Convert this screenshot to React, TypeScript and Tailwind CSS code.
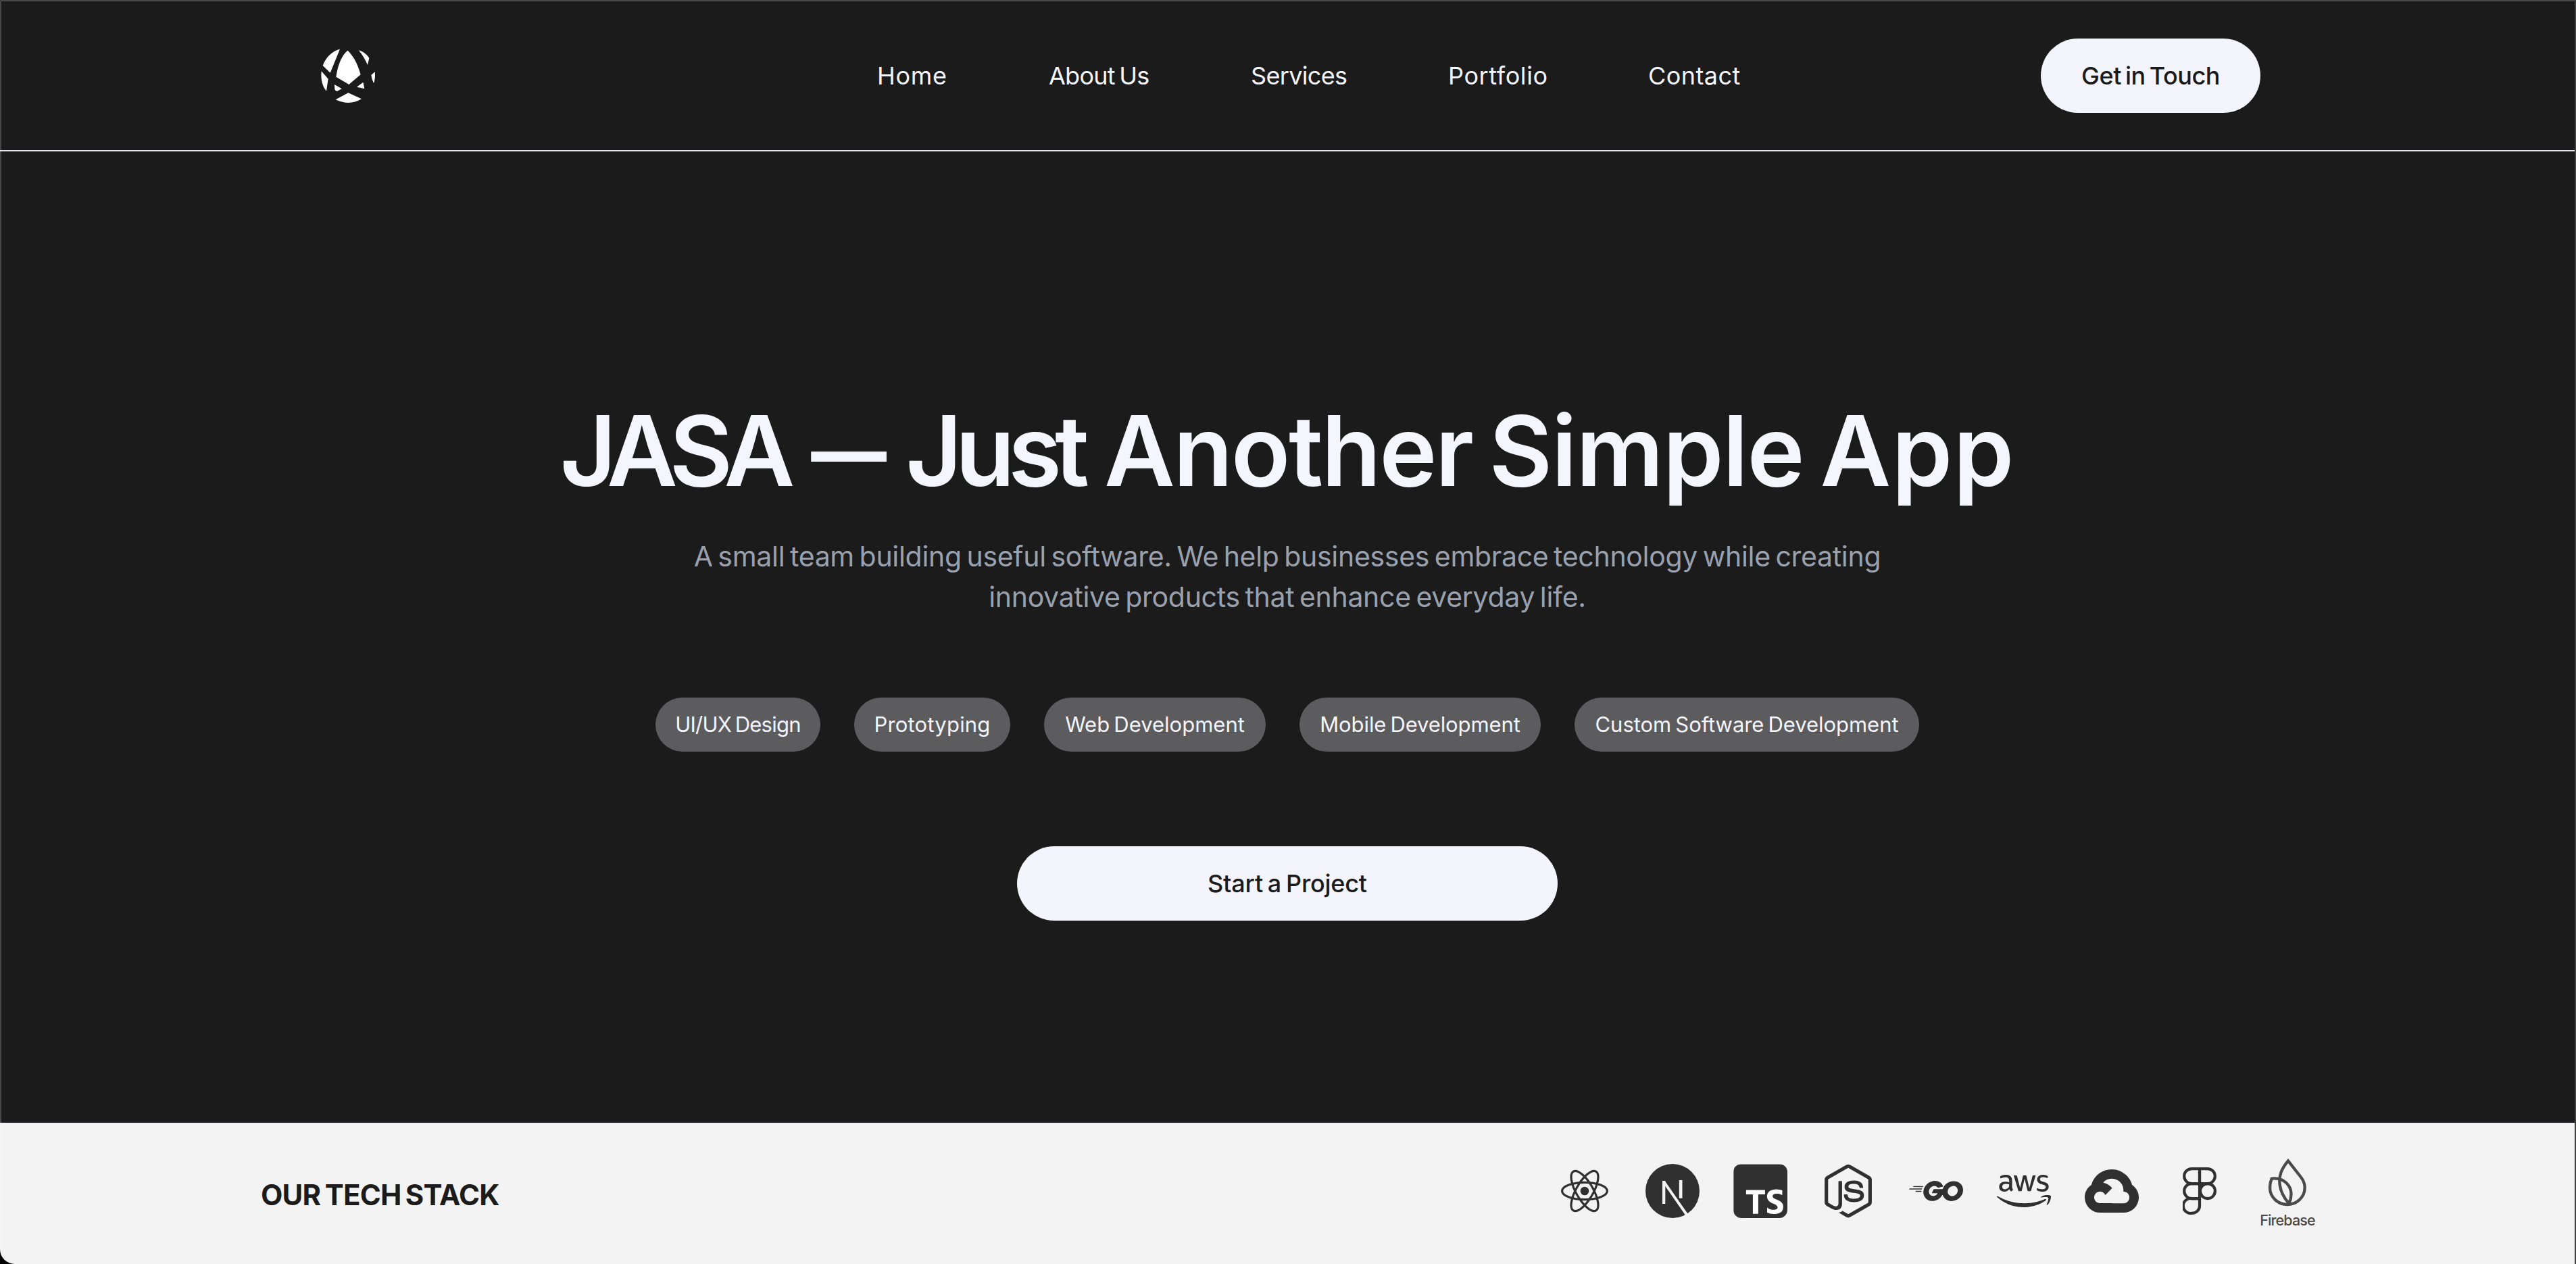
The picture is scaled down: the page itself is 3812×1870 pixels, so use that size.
import React from "react";
import { BiLogoTypescript } from "react-icons/bi";
import { FaAws, FaNodeJs } from "react-icons/fa";
import { SiGo, SiGooglecloud } from "react-icons/si";

const navItems = [
  { label: "Home", className: "w-[104px] tracking-[0.7px]" },
  { label: "About Us", className: "w-[149px] tracking-[-0.75px] [word-spacing:-3px]" },
  { label: "Services", className: "w-[142px] tracking-[-0.67px]" },
  { label: "Portfolio", className: "w-[146px] tracking-[0.6px]" },
  { label: "Contact", className: "w-[137px] tracking-[0.44px]" },
];

const services = [
  { label: "UI/UX Design", className: "w-[244px] tracking-[-0.75px]" },
  { label: "Prototyping", className: "w-[231px] tracking-[0.2px]" },
  { label: "Web Development", className: "w-[328px]" },
  { label: "Mobile Development", className: "w-[357px] tracking-[-0.1px]" },
  { label: "Custom Software Development", className: "w-[510px] tracking-[-0.05px]" },
];

function Logo() {
  return (
    <svg viewBox="105 95 240 240" className="size-20 fill-white">
      <path d="M189 97 L146 202 L113 170 C125 135 155 104 189 97z" />
      <path d="M223 103 C244 122 266 155 281 210 L229 254 L172 220 C180 165 198 125 223 103z" />
      <path d="M272 102 C290 107 308 119 319 137 L312 167 C302 145 290 123 272 102z" />
      <path d="M107 195 L137 229 L129 283 C111 262 103 230 107 195z" />
      <path d="M344 198 L328 212 Q330 231 339 249 C345 232 346 215 344 198z" />
      <path d="M165 254 L197 273 L177 284 Q169 285 166 275z" />
      <path d="M292 244 L298 273 L264 265z" />
      <path d="M226 291 L285 318 Q257 335 226 335 Q195 334 170 321z" />
    </svg>
  );
}

function ReactIcon() {
  return (
    <svg viewBox="-40 -40 80 80" className="size-20" fill="none" stroke="currentColor" strokeWidth="3.2">
      <ellipse rx="33.4" ry="12.6" />
      <ellipse rx="33.4" ry="12.6" transform="rotate(60)" />
      <ellipse rx="33.4" ry="12.6" transform="rotate(120)" />
      <circle r="6.3" fill="currentColor" stroke="none" />
    </svg>
  );
}

function NextIcon() {
  return (
    <svg viewBox="0 0 240 240" className="size-20" fill="none" stroke="#f3f3f3">
      <circle cx="120" cy="120" r="120" fill="currentColor" stroke="none" />
      <line x1="81.5" y1="75" x2="81.5" y2="177" strokeWidth="13" />
      <line x1="80" y1="77" x2="183" y2="225" strokeWidth="12" />
      <line x1="156.5" y1="72" x2="156.5" y2="152" strokeWidth="14" />
    </svg>
  );
}

function FigmaIcon() {
  return (
    <svg viewBox="0 0 50 70" className="h-[70px] w-[50px]" fill="none" stroke="currentColor" strokeWidth="4.2">
      <path d="M25 2.1H13.2a11 11 0 0 0 0 22H25z" />
      <path d="M25 2.1h11.8a11 11 0 0 1 0 22H25z" />
      <path d="M25 24.1H13.2a11 11 0 0 0 0 22H25z" />
      <circle cx="36.9" cy="35.1" r="11" />
      <path d="M25 46.1H13.2a11 11 0 1 0 0 21.8C20 67.9 25 63.2 25 57z" />
    </svg>
  );
}

function FirebaseIcon() {
  return (
    <div className="mt-[11px] flex w-20 flex-col items-center text-[#4a4a4a]">
      <svg viewBox="915 60 240 225" className="h-[75px] w-20" fill="none" stroke="currentColor" strokeWidth="13">
        <path d="M1038 79 L1096 153 C1108 169 1112 184 1112 199 A77 75 0 0 1 1035 273 A77 75 0 0 1 957 199 C957 184 960 170 965 158 C990 155 1013 161 1030 177 C1048 195 1053 215 1051 232 C1051 248 1047 259 1042 268 C1018 242 1005 215 1001 185 C996 145 1008 115 1038 79z" />
      </svg>
      <span className="-mt-px text-[21.5px] leading-[40px] font-medium tracking-[-0.9px]">Firebase</span>
    </div>
  );
}

function App() {
  return (
    <div className="h-screen overflow-hidden bg-black">
      <div className="relative flex h-full flex-col overflow-hidden rounded-bl-[22px] bg-[#1b1b1b] font-[Inter,sans-serif] text-[#f5f5fd]">
        {/* ===== Header ===== */}
        <header className="flex h-56 shrink-0 items-center border-b-2 border-[#e4e4ee] pt-0.5 pr-[467px] pl-[475px]">
          <Logo />
          <nav className="ml-[743px] flex gap-[150px] text-[36px]">
            {navItems.map((item) => (
              <a key={item.label} href="#" className={`whitespace-nowrap ${item.className}`}>
                {item.label}
              </a>
            ))}
          </nav>
          <button className="ml-auto h-[110px] w-[325px] rounded-full bg-[#f4f4fd] text-[36px] font-medium tracking-[-0.5px] text-[#1b1b1b] [word-spacing:-3px]">
            Get in Touch
          </button>
        </header>

        {/* ===== Hero ===== */}
        <main className="flex h-[1437px] shrink-0 flex-col items-center pt-[352px] pr-0.5">
          <h1 className="flex pt-px text-[144px] leading-[180px] font-semibold">
            <span className="tracking-[-11px]">JASA</span>
            <span className="ml-[19px] scale-x-[0.775]">—</span>
            <span className="ml-[12px] tracking-[-10px]">Just</span>
            <span className="ml-8 tracking-[-2.5px]">Another</span>
            <span className="ml-[25px] tracking-[-1.3px]">Simple</span>
            <span className="ml-6 tracking-[1.2px]">App</span>
          </h1>
          <p className="mt-9 text-center text-[41px] leading-[60px] tracking-[-0.3px] text-gray-400 [word-spacing:-3.6px]">
            A small team building useful software. We help businesses embrace technology while creating
            <br />
            innovative products that enhance everyday life.
          </p>
          <div className="mt-[119px] flex gap-[50px]">
            {services.map((service) => (
              <span
                key={service.label}
                className={`flex h-20 items-center justify-center rounded-full bg-[#5c5c5e] text-[31px] whitespace-nowrap [word-spacing:-2.5px] ${service.className}`}
              >
                {service.label}
              </span>
            ))}
          </div>
          <button className="mt-[140px] h-[110px] w-[800px] rounded-full bg-[#f4f4fd] text-[36px] font-medium tracking-[-0.2px] text-[#1b1b1b] [word-spacing:-2.5px]">
            Start a Project
          </button>
        </main>

        {/* ===== Tech Stack ===== */}
        <section className="flex flex-1 items-start justify-between border-t-2 border-[#f0f0f6] bg-[#f3f3f3] px-[386px] text-[#303030]">
          <h2 className="mt-[75px] text-[42px] leading-[60px] font-bold tracking-[-0.75px] text-[#1b1b1b] [word-spacing:-3px]">
            OUR TECH STACK
          </h2>
          <div className="mt-[45px] mr-px flex h-[108px] items-center gap-[50px]">
            <ReactIcon />
            <NextIcon />
            <span className="flex size-20 items-center justify-center overflow-hidden rounded-xl bg-white">
              <BiLogoTypescript className="size-[107px] shrink-0" />
            </span>
            <FaNodeJs className="size-20" />
            <SiGo className="size-20" />
            <FaAws className="size-20" />
            <SiGooglecloud className="size-20" />
            <div className="flex w-20 justify-center">
              <FigmaIcon />
            </div>
            <FirebaseIcon />
          </div>
        </section>

        {/* Window edge */}
        <div className="pointer-events-none absolute inset-0 rounded-bl-[22px] border-t-2 border-r-2 border-l-2 border-t-[#484848] border-r-[#414141] border-l-white/20" />
      </div>
    </div>
  );
}

export default App;
